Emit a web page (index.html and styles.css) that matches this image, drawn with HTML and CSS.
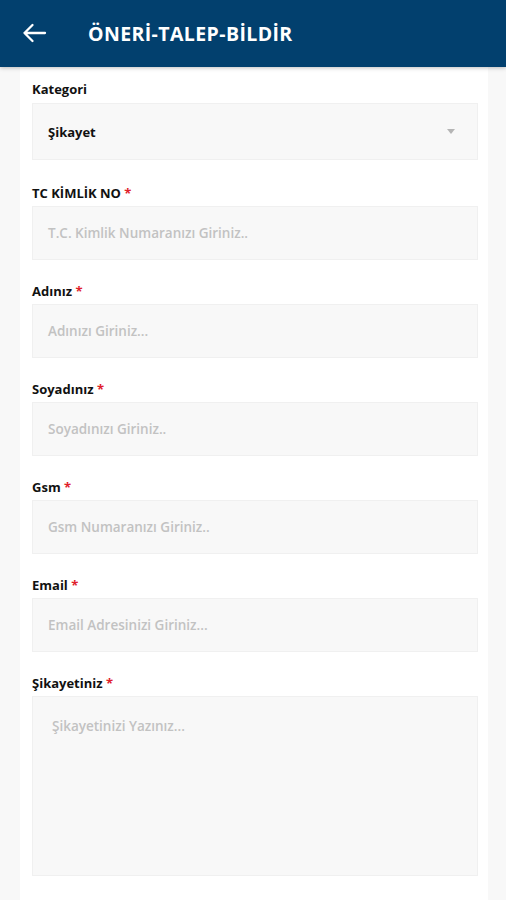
FILE: index.html
```html
<!DOCTYPE html>
<html lang="tr">
<head>
<meta charset="utf-8">
<link rel="stylesheet" href="styles.css">
</head>
<body>
<header class="appbar">
  <svg class="back" width="26" height="22" viewBox="0 0 26 22"><path d="M24 11H3.5M11.5 3L3.5 11l8 8" fill="none" stroke="#fff" stroke-width="2.3" stroke-linecap="round" stroke-linejoin="round"/></svg>
  <h1 class="title">ÖNERİ-TALEP-BİLDİR</h1>
</header>
<main class="card">
  <div class="field field-first">
    <label class="label">Kategori</label>
    <div class="input select"><span class="value">Şikayet</span><span class="caret"></span></div>
  </div>
  <div class="field">
    <label class="label">TC KİMLİK NO <span class="req">*</span></label>
    <div class="input"><span class="ph">T.C. Kimlik Numaranızı Giriniz..</span></div>
  </div>
  <div class="field">
    <label class="label">Adınız <span class="req">*</span></label>
    <div class="input"><span class="ph">Adınızı Giriniz...</span></div>
  </div>
  <div class="field">
    <label class="label">Soyadınız <span class="req">*</span></label>
    <div class="input"><span class="ph">Soyadınızı Giriniz..</span></div>
  </div>
  <div class="field">
    <label class="label">Gsm <span class="req">*</span></label>
    <div class="input"><span class="ph">Gsm Numaranızı Giriniz..</span></div>
  </div>
  <div class="field">
    <label class="label">Email <span class="req">*</span></label>
    <div class="input"><span class="ph">Email Adresinizi Giriniz...</span></div>
  </div>
  <div class="field">
    <label class="label">Şikayetiniz <span class="req">*</span></label>
    <div class="input area"><span class="ph">Şikayetinizi Yazınız...</span></div>
  </div>
</main>
</body>
</html>
```
FILE: styles.css
```css
* { box-sizing: border-box; }
html, body { margin: 0; padding: 0; }
body {
  background: #f8f8f8;
  font-family: "Open Sans", "Liberation Sans", Arial, sans-serif;
  width: 506px;
  height: 900px;
  overflow: hidden;
}
.appbar {
  height: 67px;
  background: #02406e;
  display: flex;
  align-items: center;
  padding-left: 21px;
  box-shadow: 0 1px 4px rgba(0,0,0,0.25);
  position: relative;
  z-index: 1;
}
.back { display: block; margin-top: -1px; }
.title {
  margin: 0 0 0 41px;
  color: #fff;
  font-size: 19.5px;
  font-weight: 700;
  letter-spacing: 0.4px;
}
.card {
  background: #fff;
  margin: 0 18px 0 20px;
  padding: 14px 10px 40px 12px;
  min-height: 833px;
  display: flex;
  flex-direction: column;
  gap: 23px;
}
.field { display: flex; flex-direction: column; gap: 5px; }
.field-first { gap: 6px; margin-bottom: 2px; }
.label {
  font-size: 13px;
  font-weight: 700;
  color: #111;
  line-height: 16px;
}
.req { color: #e0202a; }
.input {
  height: 54px;
  background: #f8f8f8;
  border: 1px solid #f0f0f0;
  display: flex;
  align-items: center;
  padding-left: 15px;
  font-size: 13.5px;
}
.ph { color: #c2c2c2; font-weight: 600; }
.value { color: #111; font-weight: 700; font-size: 13px; }
.select { justify-content: space-between; padding-right: 22px; height: 57px; }
.caret {
  width: 0; height: 0;
  border-left: 4px solid transparent;
  border-right: 4px solid transparent;
  border-top: 5px solid #b5b5b5;
}
.area {
  height: 180px;
  align-items: flex-start;
  padding: 20px 0 0 19px;
}
```
